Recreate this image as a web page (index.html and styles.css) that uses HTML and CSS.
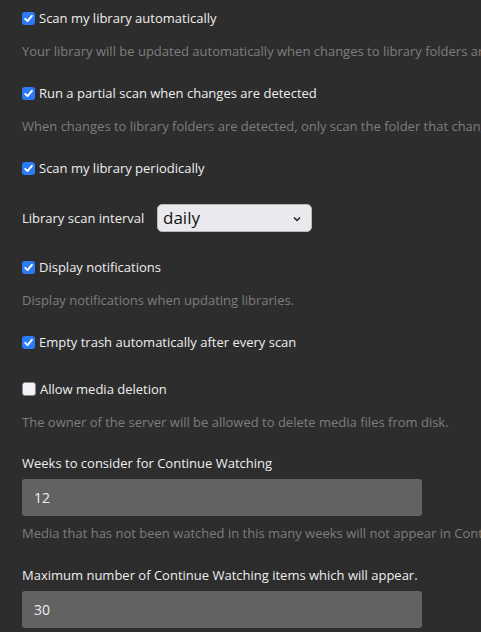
FILE: index.html
```html
<!DOCTYPE html>
<html lang="en">
<head>
<meta charset="utf-8">
<title>Library settings</title>
<link rel="stylesheet" href="styles.css">
</head>
<body>
<form class="settings">
  <div class="group">
    <label class="check"><input type="checkbox" checked><span>Scan my library automatically</span></label>
    <p class="help">Your library will be updated automatically when changes to library folders are detected.</p>
  </div>
  <div class="group">
    <label class="check"><input type="checkbox" checked><span>Run a partial scan when changes are detected</span></label>
    <p class="help">When changes to library folders are detected, only scan the folder that changed.</p>
  </div>
  <div class="group">
    <label class="check"><input type="checkbox" checked><span>Scan my library periodically</span></label>
  </div>
  <div class="group select-row">
    <label class="inline-label" for="interval">Library scan interval</label>
    <div class="select-wrap">
      <select id="interval" class="select"><option>daily</option></select>
      <svg class="chev" width="8" height="6" viewBox="0 0 8 6"><path d="M1 1.5 L4 4.5 L7 1.5" fill="none" stroke="#222" stroke-width="1.5"/></svg>
    </div>
  </div>
  <div class="group">
    <label class="check"><input type="checkbox" checked><span>Display notifications</span></label>
    <p class="help">Display notifications when updating libraries.</p>
  </div>
  <div class="group spaced">
    <label class="check"><input type="checkbox" checked><span>Empty trash automatically after every scan</span></label>
  </div>
  <div class="group snug">
    <label class="check"><input type="checkbox"><span>Allow media deletion</span></label>
    <p class="help">The owner of the server will be allowed to delete media files from disk.</p>
  </div>
  <div class="group">
    <label class="field-label">Weeks to consider for Continue Watching</label>
    <input class="text-input" type="text" value="12">
    <p class="help tight">Media that has not been watched in this many weeks will not appear in Continue Watching.</p>
  </div>
  <div class="group">
    <label class="field-label">Maximum number of Continue Watching items which will appear.</label>
    <input class="text-input" type="text" value="30">
  </div>
</form>
</body>
</html>
```

FILE: styles.css
```css
html, body {
  margin: 0;
  padding: 0;
  background: #2d2d2d;
  overflow: hidden;
}
body {
  font-family: "Open Sans", "Liberation Sans", sans-serif;
  font-size: 13px;
  line-height: 20px;
  color: #eeeeee;
}
.settings {
  padding: 8px 0 0 22px;
  display: flex;
  flex-direction: column;
}
.group {
  display: flex;
  flex-direction: column;
  margin-bottom: 22px;
}
.group.spaced {
  margin-bottom: 27px;
}
.group.snug {
  margin-bottom: 21px;
}
.check {
  display: flex;
  align-items: center;
  gap: 4px;
  white-space: nowrap;
}
.check input {
  appearance: none;
  -webkit-appearance: none;
  margin: 0;
  width: 13px;
  height: 13px;
  border-radius: 3px;
  background: #fff;
  border: 1.5px solid #8e8e93;
  box-sizing: border-box;
  flex: none;
}
.check input:checked {
  border: none;
  background: #2a7bf5 url("data:image/svg+xml;utf8,<svg xmlns='http://www.w3.org/2000/svg' viewBox='0 0 13 13'><path d='M3.2 6.8 L5.5 9.1 L9.9 3.8' fill='none' stroke='white' stroke-width='1.9' stroke-linecap='round' stroke-linejoin='round'/></svg>") center/13px 13px no-repeat;
}
.check input:not(:checked) {
  background: #f2f2f7;
  border: 1.5px solid #8a8a8f;
  width: 14px;
  height: 14px;
}
.help {
  margin: 13px 0 0;
  color: #7d7d7d;
  white-space: nowrap;
}
.help.tight {
  margin-top: 7px;
}
.select-row {
  flex-direction: row;
  align-items: center;
  margin-top: 4px;
  margin-bottom: 25px;
}
.inline-label {
  width: 135px;
}
.select-wrap {
  position: relative;
  width: 155px;
  height: 28px;
}
.select {
  appearance: none;
  -webkit-appearance: none;
  width: 100%;
  height: 100%;
  box-sizing: border-box;
  border: 1px solid #b8b8bd;
  border-radius: 5px;
  background: #e9e9ee;
  font-family: "Open Sans", "Liberation Sans", sans-serif;
  font-size: 17px;
  color: #111;
  padding: 0 0 2px 5px;
}
.chev {
  position: absolute;
  right: 11px;
  top: 12px;
}
.field-label {
  display: block;
}
.text-input {
  margin-top: 6px;
  width: 400px;
  height: 37px;
  box-sizing: border-box;
  border: none;
  border-radius: 3px;
  background: #626262;
  color: #eeeeee;
  font-family: "Open Sans", "Liberation Sans", sans-serif;
  font-size: 14px;
  padding: 0 12px;
  outline: none;
}
```
